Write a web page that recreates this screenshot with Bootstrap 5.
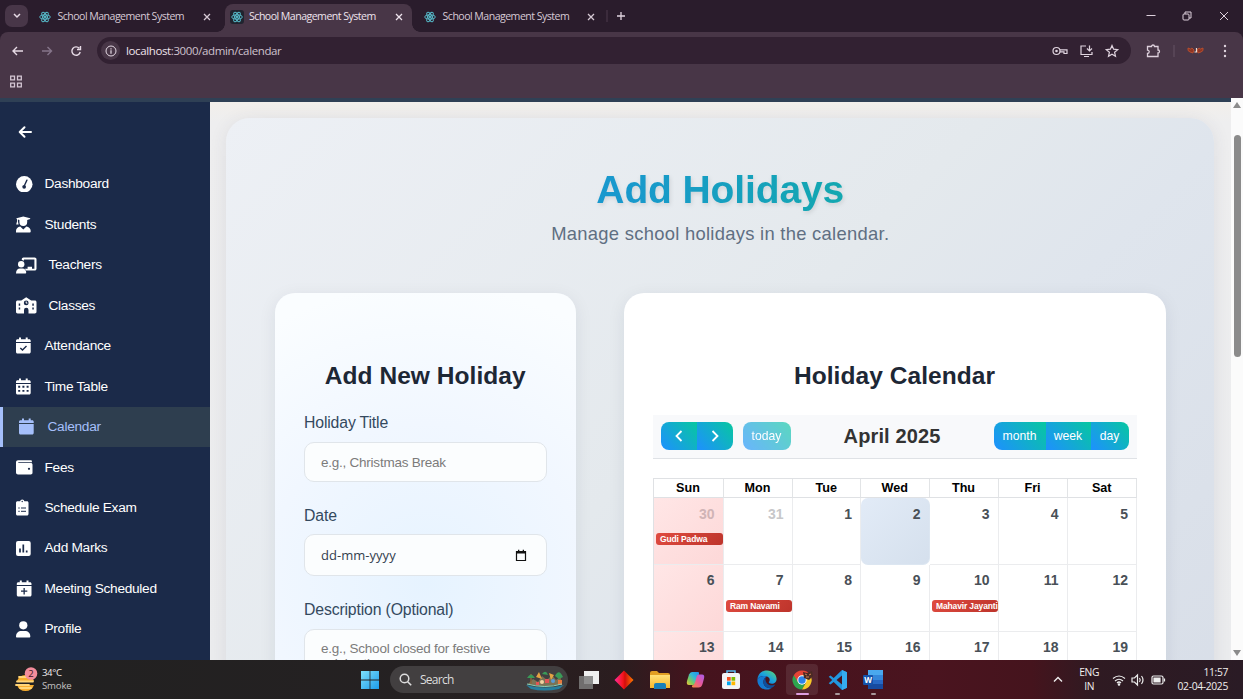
<!DOCTYPE html>
<html lang="en">
<head>
<meta charset="utf-8">
<meta name="viewport" content="width=device-width, initial-scale=1">
<title>School Management System</title>
<link href="https://cdn.jsdelivr.net/npm/bootstrap@5.3.0/dist/css/bootstrap.min.css" rel="stylesheet">
<script src="https://cdn.jsdelivr.net/npm/bootstrap@5.3.0/dist/js/bootstrap.bundle.min.js" defer></script>
<style>
body{width:1243px;height:699px;overflow:hidden;font-family:"Liberation Sans",Arial,sans-serif;background:#2a1c2c}
svg{display:block;flex:none}
.desk{width:1243px;height:699px}
.ui{font-family:"Open Sans","Noto Sans",sans-serif}
/* browser chrome */
.tabstrip{height:32px;background:#2a1c2c;color:#d6c9d5;font-size:10.3px}
.tabmenu{width:23px;height:22px;border-radius:7px;background:#483648;margin-left:5px}
.btab{width:192.600px;height:28px;padding:2px 10px 0 11px;flex:none}
.btab.last{padding:2px 9px 0 12.500px}
.btab.now{background:#483647;border-radius:8px 8px 0 0;color:#eee3ed;width:187px;height:28px;padding:0 8.500px 3px 5px;position:relative}
.btab.now::before,.btab.now::after{content:"";position:absolute;bottom:0;width:8px;height:8px}
.btab.now::before{left:-8px;background:radial-gradient(circle at 0 0,transparent 7.5px,#483647 8px)}
.btab.now::after{right:-8px;background:radial-gradient(circle at 100% 0,transparent 7.5px,#483647 8px)}
.btab .lbl{white-space:nowrap;letter-spacing:-.54px;font-size:10.600px;padding-left:6.500px}
.btab.now .lbl{padding-left:5.500px}
.toolbar{height:66px;background:#483647;border-radius:8px 8px 0 0;color:#d9cbd8}
.addr{width:1034px;height:27px;border-radius:14px;background:#322132;font-size:11.500px;color:#cfc1ce}
.addr .host{color:#eee3ed}
.addrtext{letter-spacing:-.38px;padding-left:6px}
.infodot{width:19px;height:19px;border-radius:50%;background:#483647;margin-left:4px}
/* page */
.viewport{height:562px;background:#ededee}
.topline{height:4px;background:#2f4055}
.side{width:210px;background:#1b2a49;color:#fff;font-size:13.700px;letter-spacing:-.29px}
.side .backbtn{height:62px;padding:21px 0 0 17px}
.side .item{height:40.450px;padding-left:16px;gap:12px}
.side .item span{padding-top:1px}
.side .item.on{background:#2e3e4f;color:#a5bffa;border-left:3px solid #a5bffa}
.stage{background:linear-gradient(180deg,#f2efeb 0,#eeeeef 20px,#ebecee 100%);padding:16px 17.500px 0 16px}
.panel{height:700px;border-radius:24px;background:linear-gradient(135deg,#edf0f5 0%,#e4e9ed 45%,#dfe5ed 60%,#d7dde7 100%);box-shadow:0 2px 18px rgba(50,60,80,.09);padding:48px 48px 0 49px}
.ttl{font-size:39px;line-height:46px;font-weight:700;background:linear-gradient(90deg,#1e90e8 -10%,#1899cc 40%,#14a5b4 60%,#0cb69a 85%);-webkit-background-clip:text;background-clip:text;color:transparent;filter:drop-shadow(1px 2px 2px rgba(0,0,0,.1));letter-spacing:-.12px;padding-top:1px}
.sub{font-size:18.400px;line-height:24px;letter-spacing:.28px;color:#606f82;padding-top:9px}
.box{border-radius:20px;height:500px;padding:69px 29px 0}
.formbox{width:300.500px;background:radial-gradient(circle at 50% 290px,#e6f3ff 0,#f1f7ff 160px,#fafdff 300px);box-shadow:0 4px 18px rgba(30,40,60,.08)}
.calbox{width:542px;background:#fff;box-shadow:0 4px 18px rgba(30,40,60,.08)}
.h-card{font-size:24.500px;line-height:28px;font-weight:700;color:#1d2735;letter-spacing:.06px}
.lab{font-size:15.800px;line-height:20px;color:#34495e;letter-spacing:-.15px}
.field{border:1.500px solid #e0e5ea;border-radius:10px;background:#fbfdfe;font-size:13.500px;line-height:15px;letter-spacing:-.24px;color:#7b7b7b;padding:0 16px;height:40px}
.area{height:90px;padding-top:11px}
.calhead{height:44px;background:#f8f9fb;border-bottom:1px solid #dfe2e6;padding:0 8px 2px;color:#333;margin:25px 0 19px;width:484px}
.gbtn{height:28px;border:0;background:linear-gradient(50deg,#1e90ff,#07c7a0);color:#fff;font-size:12.200px;line-height:26px;padding:0}
.mname{font-size:20px;font-weight:700;line-height:24px;color:#333;letter-spacing:.12px;margin-right:4px}
.cal{display:grid;grid-template-columns:70px 69px 68.500px 68.500px 69px 69px 69.500px;border-left:1px solid #dfe1e4;border-top:1px solid #dfe1e4;width:484.500px}
.dow{height:19px;line-height:18px;text-align:center;font-weight:700;font-size:12.600px;color:#000;border-right:1px solid #e2e4e6;border-bottom:1px solid #dfe1e4}
.day{height:66.800px;border-right:1px solid #ebecee;border-bottom:1px solid #ebecee;text-align:right;font-weight:700;font-size:14px;line-height:16px;padding:7.500px 8px 0 2px;color:#495057}
.day.sun{background:linear-gradient(135deg,#ffe6e6,#fdd8d8)}
.day.past{color:#c7c7c9}.day.sun.past{color:#d0b4b6}
.day.today{background:linear-gradient(135deg,#e2ebf7,#d5e0ed);border-radius:7px;border-color:#dce6f1}
.evt{height:12px;margin:11.500px -8px 0 0;border-radius:3px;background:linear-gradient(135deg,#e04b40,#bd342b);color:#fff;font-size:8.500px;letter-spacing:-.14px;line-height:12px;text-align:left;padding-left:4.500px;white-space:nowrap}
.sbar{width:12px;background:#fbfbfb;margin-top:-4px;padding:4px 0}
.thumb{width:7px;height:222px;border-radius:4px;background:#8b8b8b;margin-top:27px}
/* taskbar */
.task{height:39px;color:#f1eeee;background:linear-gradient(90deg,#212121 0,#252122 35%,#2b1d1f 50%,#45131d 56%,#4a141f 75%,#45141d 83%,#2f1a22 88%,#2a1b25 100%)}
.wx{width:360px;padding-left:15px;font-size:9.600px;line-height:12.500px;letter-spacing:-.15px}
.find{width:178px;height:27px;border-radius:14px;background:#423f40;font-size:12px;color:#ddd;margin-left:10px;padding:0 2px 0 9px}
.app{width:35.550px;height:39px;position:relative}
.app.focus::before{content:"";position:absolute;inset:4px 2px;border-radius:4px;background:rgba(255,255,255,.09)}
.app.run::after{content:"";position:absolute;left:50%;bottom:4px;width:5px;height:2px;margin-left:-2.500px;border-radius:1px;background:#a9989c}
.app.focus::after{width:13px;margin-left:-6.500px;background:#dd9ee0}
.app svg{position:relative}
.tray{font-size:10.300px;line-height:13.200px}
</style>
</head>
<body>
<svg width="0" height="0" class="position-absolute">
<defs>
<symbol id="react" viewBox="0 0 24 24"><g fill="none" stroke="#57bccb" stroke-width="1.9"><ellipse cx="12" cy="12" rx="10.5" ry="4.2"/><ellipse cx="12" cy="12" rx="10.5" ry="4.2" transform="rotate(60 12 12)"/><ellipse cx="12" cy="12" rx="10.5" ry="4.2" transform="rotate(120 12 12)"/></g><circle cx="12" cy="12" r="2.3" fill="#57bccb"/></symbol>
<symbol id="x" viewBox="0 0 8 8"><path d="M1 1l6 6M7 1l-6 6" stroke="currentColor" stroke-width="1.3" fill="none"/></symbol>
<linearGradient id="win" x2="1" y2="1"><stop stop-color="#7ee0fb"/><stop offset="1" stop-color="#1c9bea"/></linearGradient>
<linearGradient id="edge" x1="0" y1="1" x2="1" y2="0"><stop stop-color="#0b5bb5"/><stop offset=".5" stop-color="#1aa1df"/><stop offset="1" stop-color="#5fdc6c"/></linearGradient>
<linearGradient id="copA" x1="1" y1="0" x2="0" y2="1"><stop stop-color="#1f8df0"/><stop offset=".4" stop-color="#32b8d8"/><stop offset=".7" stop-color="#7ccb5d"/><stop offset="1" stop-color="#f5c338"/></linearGradient>
<linearGradient id="copB" x1="1" y1="0" x2="0" y2="1"><stop stop-color="#a65df0"/><stop offset=".5" stop-color="#e8589a"/><stop offset="1" stop-color="#f58a3c"/></linearGradient>
<linearGradient id="dia"><stop stop-color="#ff2b9b"/><stop offset=".45" stop-color="#f4151b"/><stop offset=".55" stop-color="#d10d0d"/><stop offset="1" stop-color="#ff7a00"/></linearGradient>
<linearGradient id="fold" x2="0" y2="1"><stop stop-color="#ffe077"/><stop offset="1" stop-color="#f6b82c"/></linearGradient>
</defs></svg>

<div class="desk d-flex flex-column">
  <div class="tabstrip ui d-flex align-items-center">
    <div class="tabmenu d-flex align-items-center justify-content-center"><svg width="8" height="6" viewBox="0 0 8 6"><path d="M1 1l3 3 3-3" fill="none" stroke="#e6dae5" stroke-width="1.5"/></svg></div>
    <div class="btab d-flex align-items-center"><svg width="12" height="12"><use href="#react"/></svg><span class="lbl me-auto">School Management System</span><svg width="8" height="8"><use href="#x"/></svg></div>
    <div class="btab now d-flex align-items-center align-self-end ms-1"><svg width="14" height="14" viewBox="0 0 14 14"><rect width="14" height="14" rx="3" fill="#20242f"/><use href="#react" x="1" y="1" width="12" height="12"/></svg><span class="lbl me-auto">School Management System</span><svg width="8" height="8"><use href="#x"/></svg></div>
    <div class="btab last d-flex align-items-center"><svg width="12" height="12"><use href="#react"/></svg><span class="lbl me-auto">School Management System</span><svg width="8" height="8"><use href="#x"/></svg></div>
    <svg width="22" height="14" viewBox="0 0 22 14"><path d="M3 1v12" stroke="#4c3b4c"/><path d="M13 7h8M17 3v8" stroke="#e0d4df" stroke-width="1.3"/></svg>
    <svg class="ms-auto me-2" width="90" height="14" viewBox="0 0 90 14" fill="none" stroke="#ddd0dc"><path d="M1.500 6.500h9"/><rect x="38" y="5" width="6" height="6" rx="1"/><path d="M40 5V3h6v6h-2"/><path d="M75 3l8 8M83 3l-8 8"/></svg>
  </div>
  <div class="toolbar ui">
    <div class="d-flex align-items-center" style="height:37px">
      <svg width="97" height="16" viewBox="0 0 97 16" fill="none" stroke="#e6dae5" stroke-width="1.4"><path d="M23 8h-10M17 4l-4 4 4 4"/><path d="M42 8h9.500M47.500 4l4 4-4 4" stroke="#85758a"/><path d="M79.300 5.300A4.200 4.200 0 1 0 80.200 9M80.500 3v3.500H77"/></svg>
      <div class="addr d-flex align-items-center">
        <span class="infodot d-flex align-items-center justify-content-center"><svg width="12" height="12" viewBox="0 0 12 12"><circle cx="6" cy="6" r="5" fill="none" stroke="#e6dae5"/><path d="M6 5.300v3.400M6 3.200v1.200" stroke="#e6dae5" stroke-width="1.2"/></svg></span>
        <span class="addrtext me-auto"><span class="host">localhost</span>:3000/admin/calendar</span>
        <svg width="80" height="16" viewBox="0 0 80 16" fill="none" stroke="#e0d4df" stroke-width="1.2"><circle cx="5.500" cy="8" r="3.500"/><circle cx="5.500" cy="8" r=".7"/><path d="M9 6.800h7v3.700h-3V8.900H9"/><path d="M35 3h-5v8.500h11V9M33 13.500h5M38.500 2.500v5M36 5.500l2.500 2.500 2.500-2.500"/><path d="M61 2.500l1.600 3.700 4.100.4-3.100 2.700.9 4-3.500-2.100-3.500 2.100.9-4-3.100-2.700 4.100-.4z"/></svg>
      </div>
      <svg class="ms-auto" width="98" height="18" viewBox="0 0 98 18" fill="none" stroke="#ddd0dc" stroke-width="1.3"><path d="M2.500 4.500h4a1.500 1.500 0 0 1 3 0h3.500V8a1.500 1.500 0 0 1 0 3v3.500H2.500V11.500a1.700 1.700 0 0 0 0-3.400z"/><path d="M29 3v12" stroke="#655365" stroke-width="1"/><path d="M43 6l2.500 1 1.500-1 2 2-1 3-3-1-2-1.500zM58 6l-2.500 1L54 6l-2 2 1 3 3-1 2-1.500z" fill="#8f3524" stroke="#c4532e" stroke-width=".8"/><path d="M51.500 6v4h-2" stroke="#f0ddd5" stroke-width="1.200"/><g fill="#e0d4df" stroke="none"><circle cx="80" cy="4" r="1.200"/><circle cx="80" cy="9" r="1.200"/><circle cx="80" cy="14" r="1.200"/></g></svg>
    </div>
    <svg width="32" height="24" viewBox="0 0 32 24" fill="none" stroke="#d5c7d4" stroke-width="1.3"><path d="M10.700 7.200h3.800v3.600h-3.800zM17.500 7.200h3.800v3.600h-3.800zM10.700 14.200h3.800v3.600h-3.800zM17.500 14.200h3.800v3.600h-3.800z"/></svg>
  </div>

  <div class="viewport d-flex flex-column overflow-hidden">
    <div class="topline flex-shrink-0"></div>
    <div class="d-flex flex-grow-1" style="height:558px">
      <nav class="side flex-shrink-0">
        <div class="backbtn"><svg width="16" height="18" viewBox="0 0 16 18" fill="none" stroke="#fff" stroke-width="2" stroke-linecap="round" stroke-linejoin="round"><path d="M14 9H3M7.500 4.200L2.700 9l4.800 4.800"/></svg></div>
        <div class="item d-flex align-items-center"><svg width="16.500" height="16.500" viewBox="0 0 16 16"><circle cx="8" cy="8" r="8" fill="#fff"/><path d="M10.600 4L8.300 9" stroke="#1b2a49" stroke-width="1.300" stroke-linecap="round"/><circle cx="7.900" cy="10.500" r="1.800" fill="#1b2a49"/></svg><span>Dashboard</span></div>
        <div class="item d-flex align-items-center"><svg width="16.500" height="17" viewBox="0 0 16.500 17" fill="#fff"><path d="M.5 2.200L7.300.4l6.900 1.800v.9l-3 .8V6a3.900 3.900 0 0 1-7.800 0V4l-1.500-.4v2l.7 3H.2l.8-3V3.300l-.5-.2zM0 16.500v-1.800c0-2.200 1.900-3.900 4.200-4.200l3.100 2.900 3.100-2.900c2.400.3 4.300 2 4.300 4.200v.9a.9.900 0 0 1-.9.900z"/></svg><span>Students</span></div>
        <div class="item d-flex align-items-center"><svg width="20.500" height="17" viewBox="0 0 20.500 17"><path fill="#fff" d="M7.500.5h11.200c1 0 1.800.8 1.800 1.800v9.500c0 1-.8 1.800-1.800 1.800H10c-.3-.8-.8-1.400-1.400-1.900h3v-1.900H16v1.900h2.400V2.600H8v1.200a4 4 0 0 0-2.200-.9v-.6c0-1 .7-1.800 1.700-1.800z"/><circle cx="5.200" cy="7.200" r="3.200" fill="#fff"/><path fill="#fff" d="M0 16.500c0-3.300 1.700-5 4-5h2.500c2.200 0 3.700 1.700 3.700 4 0 .6-.4 1-1 1z"/></svg><span>Teachers</span></div>
        <div class="item d-flex align-items-center"><svg width="20.500" height="17" viewBox="0 0 20.500 17"><path fill="#fff" d="M10.200.3l5 3.200h3.600c1 0 1.700.7 1.700 1.700v9.600c0 1-.7 1.700-1.700 1.700h-6.300v-3.600a2.200 2.200 0 0 0-4.500 0v3.600H1.700c-1 0-1.700-.7-1.700-1.700V5.200c0-1 .7-1.700 1.700-1.700h3.600z"/><circle cx="10.200" cy="5.900" r="2.400" fill="#1b2a49"/><path d="M10.200 4.500v1.600h1.200" stroke="#fff" fill="none"/><path fill="#1b2a49" d="M2.700 6.500h1.500v2.200H2.700zM2.700 10.400h1.500v2.200H2.700zM16.300 6.500h1.500v2.200h-1.500zM16.300 10.400h1.500v2.200h-1.500z"/></svg><span>Classes</span></div>
        <div class="item d-flex align-items-center"><svg width="16.500" height="17" viewBox="0 0 16.500 17"><path fill="#fff" d="M3 .5h2v1.800h4.700V.5h2v1.800h1.500c.9 0 1.500.7 1.500 1.500v1.100H0V3.800c0-.8.700-1.500 1.500-1.500H3zM0 6h14.700v9c0 .8-.7 1.500-1.500 1.500H1.500C.7 16.500 0 15.800 0 15z"/><path d="M4.300 10.900l2.200 2.200 4-4" fill="none" stroke="#1b2a49" stroke-width="1.400"/></svg><span>Attendance</span></div>
        <div class="item d-flex align-items-center"><svg width="16.500" height="17" viewBox="0 0 16.500 17"><path fill="#fff" d="M3 .5h2v1.800h4.700V.5h2v1.800h1.500c.9 0 1.500.7 1.500 1.500v1.100H0V3.800c0-.8.700-1.500 1.500-1.500H3zM0 6h14.700v9c0 .8-.7 1.500-1.500 1.500H1.500C.7 16.500 0 15.800 0 15z"/><path d="M2.200 8.800h10.500M2.200 12.900h10.500" stroke="#1b2a49" stroke-width="1.900" stroke-dasharray="2 2.200"/></svg><span>Time Table</span></div>
        <div class="item on d-flex align-items-center"><svg width="16.500" height="17" viewBox="0 0 16.500 17"><path fill="#a5bffa" d="M3 .5h2v1.800h4.700V.5h2v1.800h1.500c.9 0 1.500.7 1.500 1.500v1.100H0V3.800c0-.8.700-1.500 1.500-1.500H3zM0 6h14.700v9c0 .8-.7 1.500-1.500 1.500H1.500C.7 16.500 0 15.800 0 15z"/></svg><span>Calendar</span></div>
        <div class="item d-flex align-items-center"><svg width="16.500" height="17" viewBox="0 0 16.500 17"><path fill="#fff" d="M2 1.200h13c.6 0 .9.300.9.800v1.200H2.300v.9h12.500c1 0 1.700.7 1.700 1.700v8c0 1-.7 1.700-1.700 1.700H2c-1.100 0-2-.9-2-2V3.200c0-1.100.9-2 2-2z"/><circle cx="13" cy="9.800" r="1.100" fill="#1b2a49"/></svg><span>Fees</span></div>
        <div class="item d-flex align-items-center"><svg width="16.500" height="17" viewBox="0 0 16.500 17"><path fill="#fff" d="M1.500 2.300h2.600a2.200 2.200 0 0 1 4.300 0H11c.9 0 1.500.7 1.500 1.500V15c0 .8-.7 1.500-1.500 1.500H1.500C.7 16.500 0 15.800 0 15V3.800c0-.8.700-1.500 1.500-1.500z"/><circle cx="6.200" cy="2.500" r=".7" fill="#1b2a49"/><path d="M2.300 9h1.400M5 9h5M2.300 12.300h1.400M5 12.300h5" stroke="#1b2a49"/></svg><span>Schedule Exam</span></div>
        <div class="item d-flex align-items-center"><svg width="16.500" height="15" viewBox="0 0 16.500 15"><rect width="14.700" height="15" rx="2" fill="#fff"/><path d="M4 7.500v4M7.300 3.500v8M10.700 9.500v2" stroke="#1b2a49" stroke-width="1.700"/></svg><span>Add Marks</span></div>
        <div class="item d-flex align-items-center"><svg width="16.500" height="17" viewBox="-.8 0 16.500 17"><path fill="#fff" d="M3 .5h2v1.800h4.700V.5h2v1.800h1.500c.9 0 1.500.7 1.500 1.500v1.100H0V3.800c0-.8.700-1.500 1.500-1.500H3zM0 6h14.700v9c0 .8-.7 1.500-1.500 1.500H1.500C.7 16.500 0 15.800 0 15z"/><path d="M7.350 8v6.400M4.200 11.200h6.300" stroke="#1b2a49" stroke-width="1.300"/></svg><span>Meeting Scheduled</span></div>
        <div class="item d-flex align-items-center"><svg width="16.500" height="17" viewBox="0 0 16.500 17" fill="#fff"><circle cx="7.300" cy="4.300" r="4.100"/><path d="M0 15.500c0-3.600 2.400-5.500 5.500-5.500h3.300c3.200 0 5.500 1.900 5.500 5.500 0 .7-.4 1-1 1H1c-.6 0-1-.3-1-1z"/></svg><span>Profile</span></div>
      </nav>

      <main class="stage flex-grow-1">
        <div class="panel">
          <div class="text-center" style="height:127px">
            <div class="ttl">Add Holidays</div>
            <div class="sub">Manage school holidays in the calendar.</div>
          </div>
          <div class="d-flex justify-content-between">
            <section class="box formbox">
              <div class="h-card text-center">Add New Holiday</div>
              <div class="lab" style="margin:23px 0 9px">Holiday Title</div>
              <div class="field d-flex align-items-center">e.g., Christmas Break</div>
              <div class="lab" style="margin:24px 0 8px">Date</div>
              <div class="field d-flex align-items-center justify-content-between" style="height:42px;color:#33404e;padding-right:19px"><span style="font-family:'Open Sans',sans-serif;font-size:13px;letter-spacing:.03px">dd-mm-yyyy</span><svg width="12" height="13" viewBox="0 0 12 13"><path d="M1.500 2.500h9v9h-9z" fill="none" stroke="#111" stroke-width="1.200"/><path d="M1 2h10v2.500H1zM3 .7h1.300V3H3zM7.700.7H9V3H7.700z" fill="#111"/></svg></div>
              <div class="lab" style="margin:24px 0 9px">Description (Optional)</div>
              <div class="field area">e.g., School closed for festive celebration</div>
            </section>
            <section class="box calbox">
              <div class="h-card text-center">Holiday Calendar</div>
              <div class="calhead d-flex align-items-center justify-content-between">
                <div class="d-flex" style="width:134px">
                  <button class="gbtn" style="width:36px;border-radius:8px 0 0 8px" aria-label="Previous"><svg class="mx-auto" width="10" height="12" viewBox="0 0 10 12"><path d="M7.500 1L2.500 6l5 5" fill="none" stroke="#fff" stroke-width="1.800"/></svg></button><button class="gbtn" style="width:36px;border-radius:0 8px 8px 0" aria-label="Next"><svg class="mx-auto" width="10" height="12" viewBox="0 0 10 12"><path d="M2.500 1l5 5-5 5" fill="none" stroke="#fff" stroke-width="1.800"/></svg></button>
                  <button class="gbtn" style="width:48px;border-radius:8px;margin-left:10px;opacity:.65">today</button>
                </div>
                <div class="mname">April 2025</div>
                <div class="d-flex" style="width:135px"><button class="gbtn" style="width:52px;border-radius:8px 0 0 8px">month</button><button class="gbtn" style="width:45px">week</button><button class="gbtn" style="width:38px;border-radius:0 8px 8px 0">day</button></div>
              </div>
              <div class="cal">
                <div class="dow">Sun</div><div class="dow">Mon</div><div class="dow">Tue</div><div class="dow">Wed</div><div class="dow">Thu</div><div class="dow">Fri</div><div class="dow">Sat</div>
                <div class="day sun past">30<div class="evt">Gudi Padwa</div></div><div class="day past">31</div><div class="day">1</div><div class="day today">2</div><div class="day">3</div><div class="day">4</div><div class="day">5</div>
                <div class="day sun">6</div><div class="day">7<div class="evt">Ram Navami</div></div><div class="day">8</div><div class="day">9</div><div class="day">10<div class="evt">Mahavir Jayanti</div></div><div class="day">11</div><div class="day">12</div>
                <div class="day sun">13</div><div class="day">14</div><div class="day">15</div><div class="day">16</div><div class="day">17</div><div class="day">18</div><div class="day">19</div>
              </div>
            </section>
          </div>
        </div>
      </main>
      <div class="sbar d-flex flex-column align-items-center flex-shrink-0"><svg width="8" height="6" viewBox="0 0 8 6"><path d="M4 0l4 6H0z" fill="#8b8b8b"/></svg><div class="thumb"></div><svg class="mt-auto" width="8" height="6" viewBox="0 0 8 6"><path d="M4 6L0 0h8z" fill="#8b8b8b"/></svg></div>
    </div>
  </div>

  <footer class="task ui d-flex align-items-center">
    <div class="wx d-flex align-items-center">
      <svg width="24" height="26" viewBox="0 0 24 26"><path d="M2 14a9 9 0 0 1 17 0zM2 18h17a9 9 0 0 1-17 0z" fill="#f7ad2e"/><path d="M4 10h12M2 14.500h16M1 18h13M5 21h11" stroke="#ffd578" stroke-width="1.800" stroke-linecap="round"/><circle cx="16" cy="6.500" r="6.300" fill="#f38c9b"/><text x="16" y="9.800" text-anchor="middle" font-size="9.500" fill="#40151c">2</text></svg>
      <div style="margin-left:3px"><div style="letter-spacing:-.4px">34°C</div><div style="color:#c4c2c2">Smoke</div></div>
    </div>
    <svg width="20" height="20" viewBox="0 0 20 20"><path d="M1 1h8.600v8.600H1zM10.400 1H19v8.600h-8.600zM1 10.400h8.600V19H1zM10.400 10.400H19V19h-8.600z" fill="url(#win)"/></svg>
    <div class="find d-flex align-items-center"><svg width="13" height="13" viewBox="0 0 13 13"><circle cx="5.500" cy="5.500" r="4.300" fill="none" stroke="#ddd" stroke-width="1.500"/><path d="M8.700 8.700l3.500 3.500" stroke="#ddd" stroke-width="1.600"/></svg><span class="ms-2 me-auto" style="letter-spacing:-.75px">Search</span>
      <svg width="42" height="22" viewBox="0 0 42 22"><path d="M2 16q19 5 38 0l-5 4q-15 3-28 0z" fill="#267f9e"/><path d="M4 15l5-5 5 3 4-6 5 4 5-5 4 5 4-3 2 7-18 3z" fill="#7b7355"/><path d="M7 5v11M36 5v11" stroke="#8d633b" stroke-width="1.500"/><path d="M3 9q4-7 8 0zM31 7q4-8 8 1l-4 2zM18 5q4-5 6 1z" fill="#3a9a58"/><path d="M12 8l3-5 3 7zM25 4l5 2-3 5z" fill="#e4a343"/><path d="M12 13h3v3h-3zM21 10h4v4h-4z" fill="#e25555"/><circle cx="18" cy="13" r="2" fill="#f1d2a0"/><circle cx="29" cy="12" r="2" fill="#5a9bd5"/><path d="M34 11h4v5h-4z" fill="#e6793e"/><path d="M3 15q18 5 35 0" fill="none" stroke="#87d2ba"/></svg></div>
    <div class="d-flex" style="margin-left:3px">
      <div class="app d-flex align-items-center justify-content-center"><svg width="20" height="18" viewBox="0 0 20 18"><path d="M5 0h15v13H5z" fill="#efefef"/><path d="M0 5h14v13H0z" fill="#7d7d7d" fill-opacity=".85"/></svg></div>
      <div class="app d-flex align-items-center justify-content-center"><svg width="20" height="20" viewBox="0 0 20 20"><path d="M10 .5l9.500 9.500-9.500 9.500L.5 10z" fill="url(#dia)"/></svg></div>
      <div class="app d-flex align-items-center justify-content-center"><svg width="20" height="18" viewBox="0 0 20 18"><path d="M0 2q0-2 2-2h5l2 2h9q2 0 2 2v3H0z" fill="#e19e22"/><path d="M0 4h20v13H0z" fill="url(#fold)"/><path d="M4 18v-4q0-2 2-2h8q2 0 2 2v4z" fill="#177fba"/></svg></div>
      <div class="app d-flex align-items-center justify-content-center"><svg width="19" height="19" viewBox="0 0 19 19"><path d="M6 2h6q1.500 0 1 2l-2.500 8q-1 3-3.500 3H3q-3 0-2-4l2-6.500Q4 2 6 2z" fill="url(#copA)"/><path d="M12.500 4.500H16q3 0 2 4L16.500 14q-1 3.500-4 3.500H7q-1.500 0-1-2 2 0 3-3l1.500-5.500q.5-2.500 2-2.500z" fill="url(#copB)"/></svg></div>
      <div class="app d-flex align-items-center justify-content-center"><svg width="20" height="21" viewBox="0 0 20 21"><path d="M6 5V2h8v3" fill="none" stroke="#58bdf0" stroke-width="1.500"/><rect x="1" y="4" width="18" height="16" rx="2" fill="#f2f4f5"/><path d="M6 8h3.700v3.700H6z" fill="#f25022"/><path d="M10.500 8h3.700v3.700h-3.700z" fill="#7fba00"/><path d="M6 12.500h3.700v3.700H6z" fill="#00a4ef"/><path d="M10.500 12.500h3.700v3.700h-3.700z" fill="#ffb900"/></svg></div>
      <div class="app d-flex align-items-center justify-content-center"><svg width="20" height="20" viewBox="0 0 20 20"><path d="M.4 9.500C1 4 5 .4 10 .4c5.500 0 9.600 4 9.600 8.600 0 3-2.200 4.800-4.800 4.800-2 0-3-.8-3-1.500 0-.6.9-.9.900-2.500 0-2-2-3.800-5-3.800-3.500 0-6.300 1.500-7.300 3.500z" fill="url(#edge)"/><path d="M.4 9.500C1.400 7.500 4.200 6 7.700 6c1 0 1.800.2 2.500.5C7.500 7.500 6.400 9.800 6.400 12c0 3.800 3.300 6.200 6.800 6.200.5 0 1 0 1.500-.2-1.400 1-3 1.600-4.700 1.600C4.400 19.600.2 15.300.4 9.500z" fill="#1479d0"/><path d="M6.400 12c0-1.500.6-3.200 2-4.500-.3 4 1.600 7.800 6.600 7.800 1.600 0 2.600-.4 3.300-.8-1 1.800-3 3.700-5.100 3.700-3.500 0-6.800-2.400-6.800-6.200z" fill="#0d4f9c"/></svg></div>
      <div class="app focus run d-flex align-items-center justify-content-center"><svg width="23" height="20" viewBox="0 0 23 20"><path d="M2.800 5.200A9.500 9.500 0 0 0 11 19.500L15 12z" fill="#2da44e"/><path d="M11 5h8.200A9.500 9.500 0 0 1 11 19.500l4-7z" fill="#f7c928"/><path d="M2.800 5.200A9.500 9.500 0 0 1 19.200 5H11l-4 7z" fill="#e64436"/><circle cx="11" cy="10" r="4.700" fill="#fff"/><circle cx="11" cy="10" r="3.700" fill="#2c82ea"/><path d="M12 2l4 1 5-2 1 5-4 4-5-2z" fill="#4a2a24"/><path d="M14 4l2 1M18 5l2-1M15 7h3" stroke="#d08155"/></svg></div>
      <div class="app run d-flex align-items-center justify-content-center"><svg width="20" height="20" viewBox="0 0 20 20"><path d="M14 0l5 2.300v15.400L14 20 5.700 12 2.500 14.500.7 13.300 4.200 10 .7 6.700l1.800-1.200L5.700 8zm0 5.500L8.500 10l5.500 4.500z" fill="#2196df"/><path d="M14 0l5 2.300v15.400L14 20z" fill="#35adf0"/></svg></div>
      <div class="app run d-flex align-items-center justify-content-center"><svg width="20" height="19" viewBox="0 0 20 19"><rect x="5" y="0" width="15" height="19" rx="1.500" fill="#2768c4"/><path d="M5 0h15v5H5z" fill="#4aa8ee"/><path d="M5 5h15v5H5z" fill="#3487db"/><path d="M5 14h15v5H5z" fill="#174a9f"/><rect x="0" y="5" width="10" height="10" rx="1" fill="#1552aa"/><text x="5" y="12.800" text-anchor="middle" font-size="8" font-weight="700" fill="#fff">W</text></svg></div>
    </div>
    <div class="tray d-flex align-items-center ms-auto" style="padding-right:15px">
      <svg width="10" height="7" viewBox="0 0 10 7"><path d="M1 5.500l4-4 4 4" fill="none" stroke="#eee" stroke-width="1.400"/></svg>
      <div class="text-center" style="margin:0 13px 0 16px;letter-spacing:-.4px">ENG<br>IN</div>
      <svg width="54" height="14" viewBox="0 0 54 14" fill="none" stroke="#eee" stroke-width="1.200"><path d="M1 5.500q6-5 12 0M3 8q4-3.500 8 0M5 10q2-2 4 0"/><circle cx="7" cy="11.500" r=".7" fill="#eee"/><path d="M20 5h2.500L25.500 2v10l-3-3H20zM27.500 5q1.500 2 0 4M29.500 3q3 4 0 8"/><rect x="40" y="3" width="11" height="8" rx="1.500"/><path d="M42 5h6v4h-6z" fill="#eee"/><path d="M52.500 5.500v3"/></svg>
      <div class="text-end" style="width:62px;letter-spacing:-.33px">11:57<br>02-04-2025</div>
    </div>
  </footer>
</div>
</body>
</html>
